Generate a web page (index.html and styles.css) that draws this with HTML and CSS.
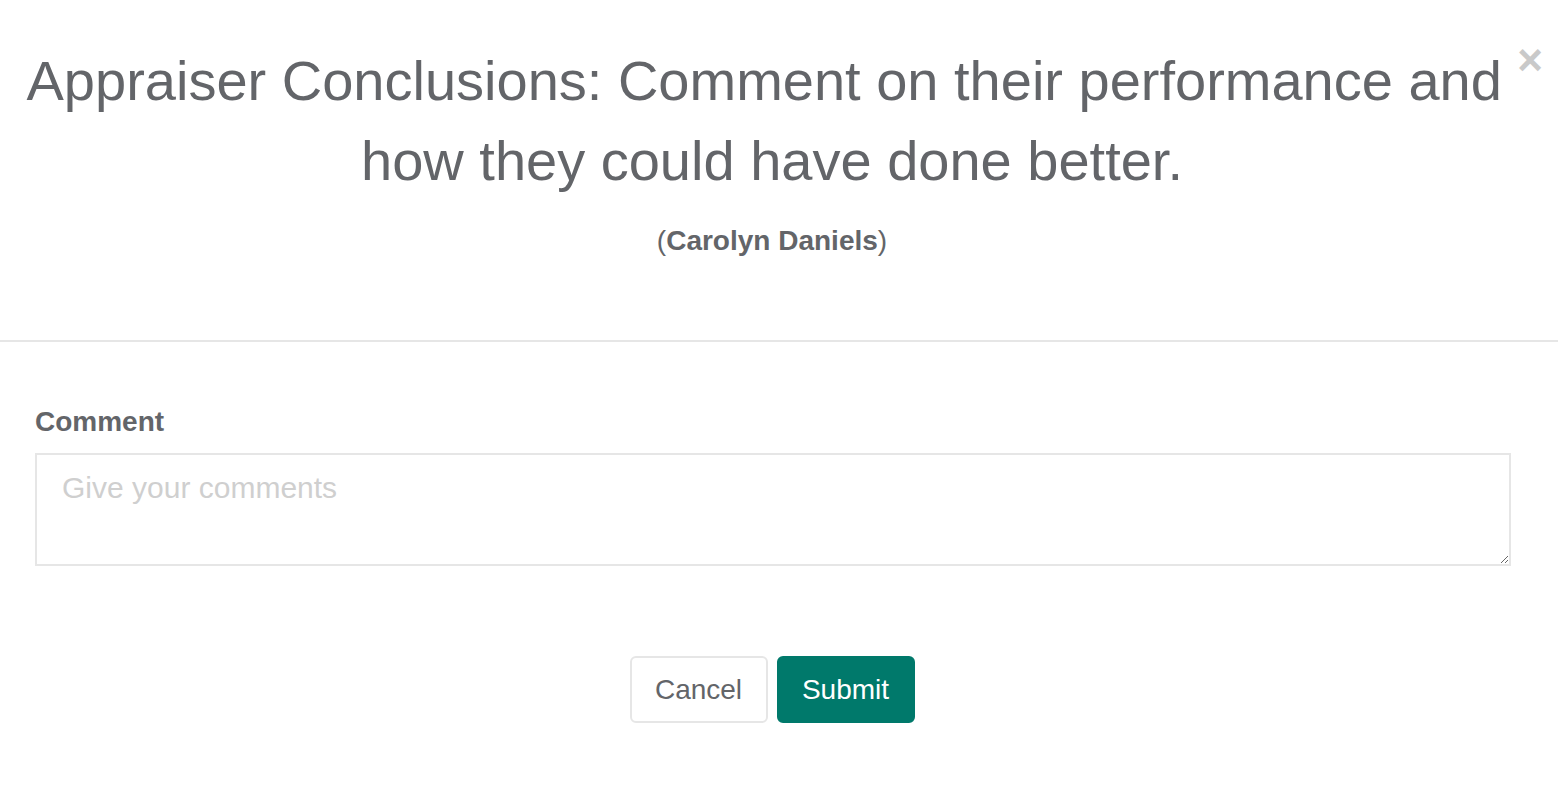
FILE: index.html
```html
<!DOCTYPE html>
<html>
<head>
<meta charset="utf-8">
<link rel="stylesheet" href="styles.css">
</head>
<body>
<div class="modal">
  <div class="modal-header">
    <button class="close" type="button">&times;</button>
    <h2 class="title">Appraiser Conclusions: Comment on their performance and&nbsp;<wbr>how they could have done better.</h2>
    <p class="subtitle">(<b>Carolyn Daniels</b>)</p>
  </div>
  <div class="modal-body">
    <label class="label" for="c">Comment</label>
    <textarea id="c" class="field" placeholder="Give your comments"></textarea>
  </div>
  <div class="modal-footer">
    <button class="btn btn-default" type="button">Cancel</button>
    <button class="btn btn-primary" type="button">Submit</button>
  </div>
</div>
</body>
</html>
```
FILE: styles.css
```css
* { box-sizing: border-box; }
html, body { margin: 0; padding: 0; background: #fff; }
body {
  font-family: "Liberation Sans", Arial, Helvetica, sans-serif;
  color: #636569;
}
.modal { width: 1558px; }
.modal-header {
  position: relative;
  padding: 41px 29px 0 15px;
  height: 342px;
  border-bottom: 2px solid #e6e6e6;
}
.close {
  position: absolute;
  top: 38px;
  right: 15px;
  border: 0;
  background: none;
  padding: 0;
  font-family: "Liberation Sans", Arial, sans-serif;
  font-size: 44px;
  font-weight: bold;
  line-height: 44px;
  color: #c9c9c9;
  cursor: pointer;
}
.title {
  margin: 0;
  text-align: center;
  font-size: 56px;
  font-weight: normal;
  line-height: 80px;
}
.subtitle {
  margin: 24px 0 0;
  text-align: center;
  font-size: 28px;
  line-height: 32px;
}
.modal-body {
  padding: 62px 48px 0 35px;
}
.label {
  display: block;
  font-size: 28px;
  font-weight: bold;
  line-height: 36px;
  margin-bottom: 13px;
}
.field {
  display: block;
  width: 1476px;
  height: 113px;
  border: 2px solid #e6e6e6;
  border-radius: 0;
  padding: 14px 25px;
  font-family: "Liberation Sans", Arial, sans-serif;
  font-size: 30px;
  line-height: 38px;
  color: #636569;
  resize: vertical;
  outline: none;
}
.field::placeholder { color: #cfcfcf; }
.modal-footer {
  display: flex;
  justify-content: center;
  gap: 9px;
  padding: 90px 14px 0 0;
}
.btn {
  width: 138px;
  height: 67px;
  border-radius: 6px;
  font-family: "Liberation Sans", Arial, sans-serif;
  font-size: 28px;
  cursor: pointer;
}
.btn-default {
  background: #fff;
  border: 2px solid #e6e6e6;
  color: #636569;
}
.btn-primary {
  background: #00796b;
  border: 2px solid #00796b;
  color: #fff;
}
```
